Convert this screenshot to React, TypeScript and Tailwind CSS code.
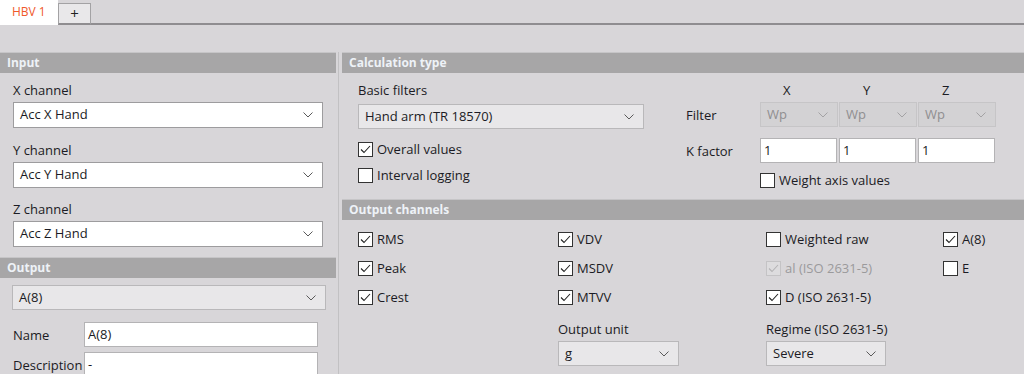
import React from 'react';

const Chevron = ({ color = '#5a5a5a' }: { color?: string }) => (
  <svg width="10" height="6" viewBox="0 0 10 6" className="shrink-0">
    <polyline points="0.5,0.5 5,5 9.5,0.5" fill="none" stroke={color} strokeWidth="1" />
  </svg>
);

const Header = ({ children }: { children?: React.ReactNode }) => (
  <div className="h-[21px] bg-[#a7a6a7] border-t border-[#c6c5c7] pl-[7px] text-[12px] leading-[20px] font-bold text-[#eef2f7]">
    {children}
  </div>
);

const Select = ({ value, className, tone = 'white' }: { value: string; className: string; tone?: 'white' | 'grey' | 'disabled' }) => {
  const look =
    tone === 'white'
      ? 'bg-white border-[#9d9c9e] text-[#1b1b24]'
      : tone === 'grey'
        ? 'bg-[#e8e7e9] border-[#b9b8ba] text-[#1b1b24]'
        : 'bg-[#d3d2d4] border-[#c6c5c7] text-[#8f8e90]';
  return (
    <div className={`flex items-center justify-between border pl-[6px] pr-[9px] text-[13px] ${look} ${className}`}>
      <span>{value}</span>
      <Chevron color={tone === 'disabled' ? '#a3a2a4' : '#5a5a5a'} />
    </div>
  );
};

const Field = ({ value, className }: { value: string; className: string }) => (
  <div className={`flex items-center bg-white border border-[#b4b3b5] pl-[3px] text-[13px] text-[#1b1b24] ${className}`}>
    {value}
  </div>
);

const Check = ({ label, checked = false, disabled = false }: { label: string; checked?: boolean; disabled?: boolean }) => (
  <div className="flex items-center h-[15px] text-[13px] leading-[15px]">
    <svg width="15" height="15" viewBox="0 0 15 15" className="shrink-0">
      <rect x="0.5" y="0.5" width="14" height="14" fill={disabled ? '#dddcde' : '#ffffff'} stroke={disabled ? '#c4c3c5' : '#333333'} />
      {checked && (
        <polyline points="3,7.5 6,10.5 12,4" fill="none" stroke={disabled ? '#b4b3b5' : '#222222'} strokeWidth="1.1" />
      )}
    </svg>
    <span className={`ml-[4px] ${disabled ? 'text-[#9b9a9c]' : 'text-[#1b1b24]'}`}>{label}</span>
  </div>
);

const Label = ({ children, className = '' }: { children?: React.ReactNode; className?: string }) => (
  <div className={`h-[16px] leading-[16px] text-[13px] text-[#1b1b24] ${className}`}>{children}</div>
);

export default function App() {
  return (
    <div className="w-[1024px] h-[374px] overflow-hidden bg-[#d8d6d9] font-['Open_Sans',sans-serif]">
      {/* tabs */}
      <div className="flex items-end h-[25px]">
        <div className="w-[58px] h-[25px] bg-white pl-[12px] text-[12px] leading-[24px] text-[#f0592b]">HBV 1</div>
        <div className="w-[33px] h-[22px] bg-[#e9e8ea] border border-[#a3a2a4] border-b-2 border-b-[#8f8d90] flex items-center justify-center text-[15px] text-[#222]">
          +
        </div>
        <div className="flex-1 h-[2px] bg-[#8f8d90]" />
      </div>

      <div className="flex mt-[27px] h-[322px]">
        {/* left column */}
        <div className="w-[336px] mr-[2px]">
          <Header>Input</Header>
          <div className="pl-[13px] pt-[9px]">
            <Label className="mb-[4px]">X channel</Label>
            <Select value="Acc X Hand" className="w-[310px] h-[26px]" />
            <Label className="mt-[14px] mb-[4px]">Y channel</Label>
            <Select value="Acc Y Hand" className="w-[310px] h-[26px]" />
            <Label className="mt-[13px] mb-[4px]">Z channel</Label>
            <Select value="Acc Z Hand" className="w-[310px] h-[26px]" />
          </div>
          <div className="mt-[10px]">
            <Header>Output</Header>
          </div>
          <div className="pl-[12px] pt-[7px]">
            <Select value="A(8)" tone="grey" className="w-[314px] h-[25px]" />
            <div className="flex items-center mt-[12px]">
              <Label className="w-[72px] pl-[1px]">Name</Label>
              <Field value="A(8)" className="w-[234px] h-[25px]" />
            </div>
            <div className="flex items-center mt-[5px]">
              <Label className="w-[72px] pl-[1px]">Description</Label>
              <Field value="-" className="w-[234px] h-[25px]" />
            </div>
          </div>
        </div>
        <div className="w-px bg-[#c2c1c3]" />

        {/* right column */}
        <div className="flex-1 ml-[3px]">
          <Header>Calculation type</Header>
          <div className="flex h-[126px] pl-[16px] pt-[9px]">
            <div className="w-[328px]">
              <Label className="mb-[6px]">Basic filters</Label>
              <Select value="Hand arm (TR 18570)" tone="grey" className="w-[286px] h-[25px]" />
              <div className="mt-[13px]">
                <Check label="Overall values" checked />
              </div>
              <div className="mt-[11px]">
                <Check label="Interval logging" />
              </div>
            </div>
            <div>
              <div className="grid grid-cols-[74px_79px_79px_79px]">
                <div />
                <Label className="pl-[23px]">X</Label>
                <Label className="pl-[24px]">Y</Label>
                <Label className="pl-[24px]">Z</Label>
              </div>
              <div className="grid grid-cols-[74px_79px_79px_79px] items-center mt-[4px]">
                <Label>Filter</Label>
                <Select value="Wp" tone="disabled" className="w-[78px] h-[25px]" />
                <Select value="Wp" tone="disabled" className="w-[78px] h-[25px]" />
                <Select value="Wp" tone="disabled" className="w-[78px] h-[25px]" />
              </div>
              <div className="grid grid-cols-[74px_79px_79px_79px] items-center mt-[11px]">
                <Label>K factor</Label>
                <Field value="1" className="w-[77px] h-[25px]" />
                <Field value="1" className="w-[77px] h-[25px]" />
                <Field value="1" className="w-[77px] h-[25px]" />
              </div>
              <div className="ml-[74px] mt-[10px]">
                <Check label="Weight axis values" />
              </div>
            </div>
          </div>

          <Header>Output channels</Header>
          <div className="flex pl-[16px] pt-[12px]">
            <div className="w-[200px] flex flex-col gap-[14px]">
              <Check label="RMS" checked />
              <Check label="Peak" checked />
              <Check label="Crest" checked />
            </div>
            <div className="w-[208px] flex flex-col gap-[14px]">
              <Check label="VDV" checked />
              <Check label="MSDV" checked />
              <Check label="MTVV" checked />
              <div className="mt-[2px]">
                <Label className="mb-[4px]">Output unit</Label>
                <Select value="g" tone="grey" className="w-[121px] h-[25px]" />
              </div>
            </div>
            <div className="w-[177px] flex flex-col gap-[14px]">
              <Check label="Weighted raw" />
              <Check label="al (ISO 2631-5)" checked disabled />
              <Check label="D (ISO 2631-5)" checked />
              <div className="mt-[2px]">
                <Label className="mb-[4px]">Regime (ISO 2631-5)</Label>
                <Select value="Severe" tone="grey" className="w-[120px] h-[25px]" />
              </div>
            </div>
            <div className="flex flex-col gap-[14px]">
              <Check label="A(8)" checked />
              <Check label="E" />
            </div>
          </div>
        </div>
      </div>
    </div>
  );
}
